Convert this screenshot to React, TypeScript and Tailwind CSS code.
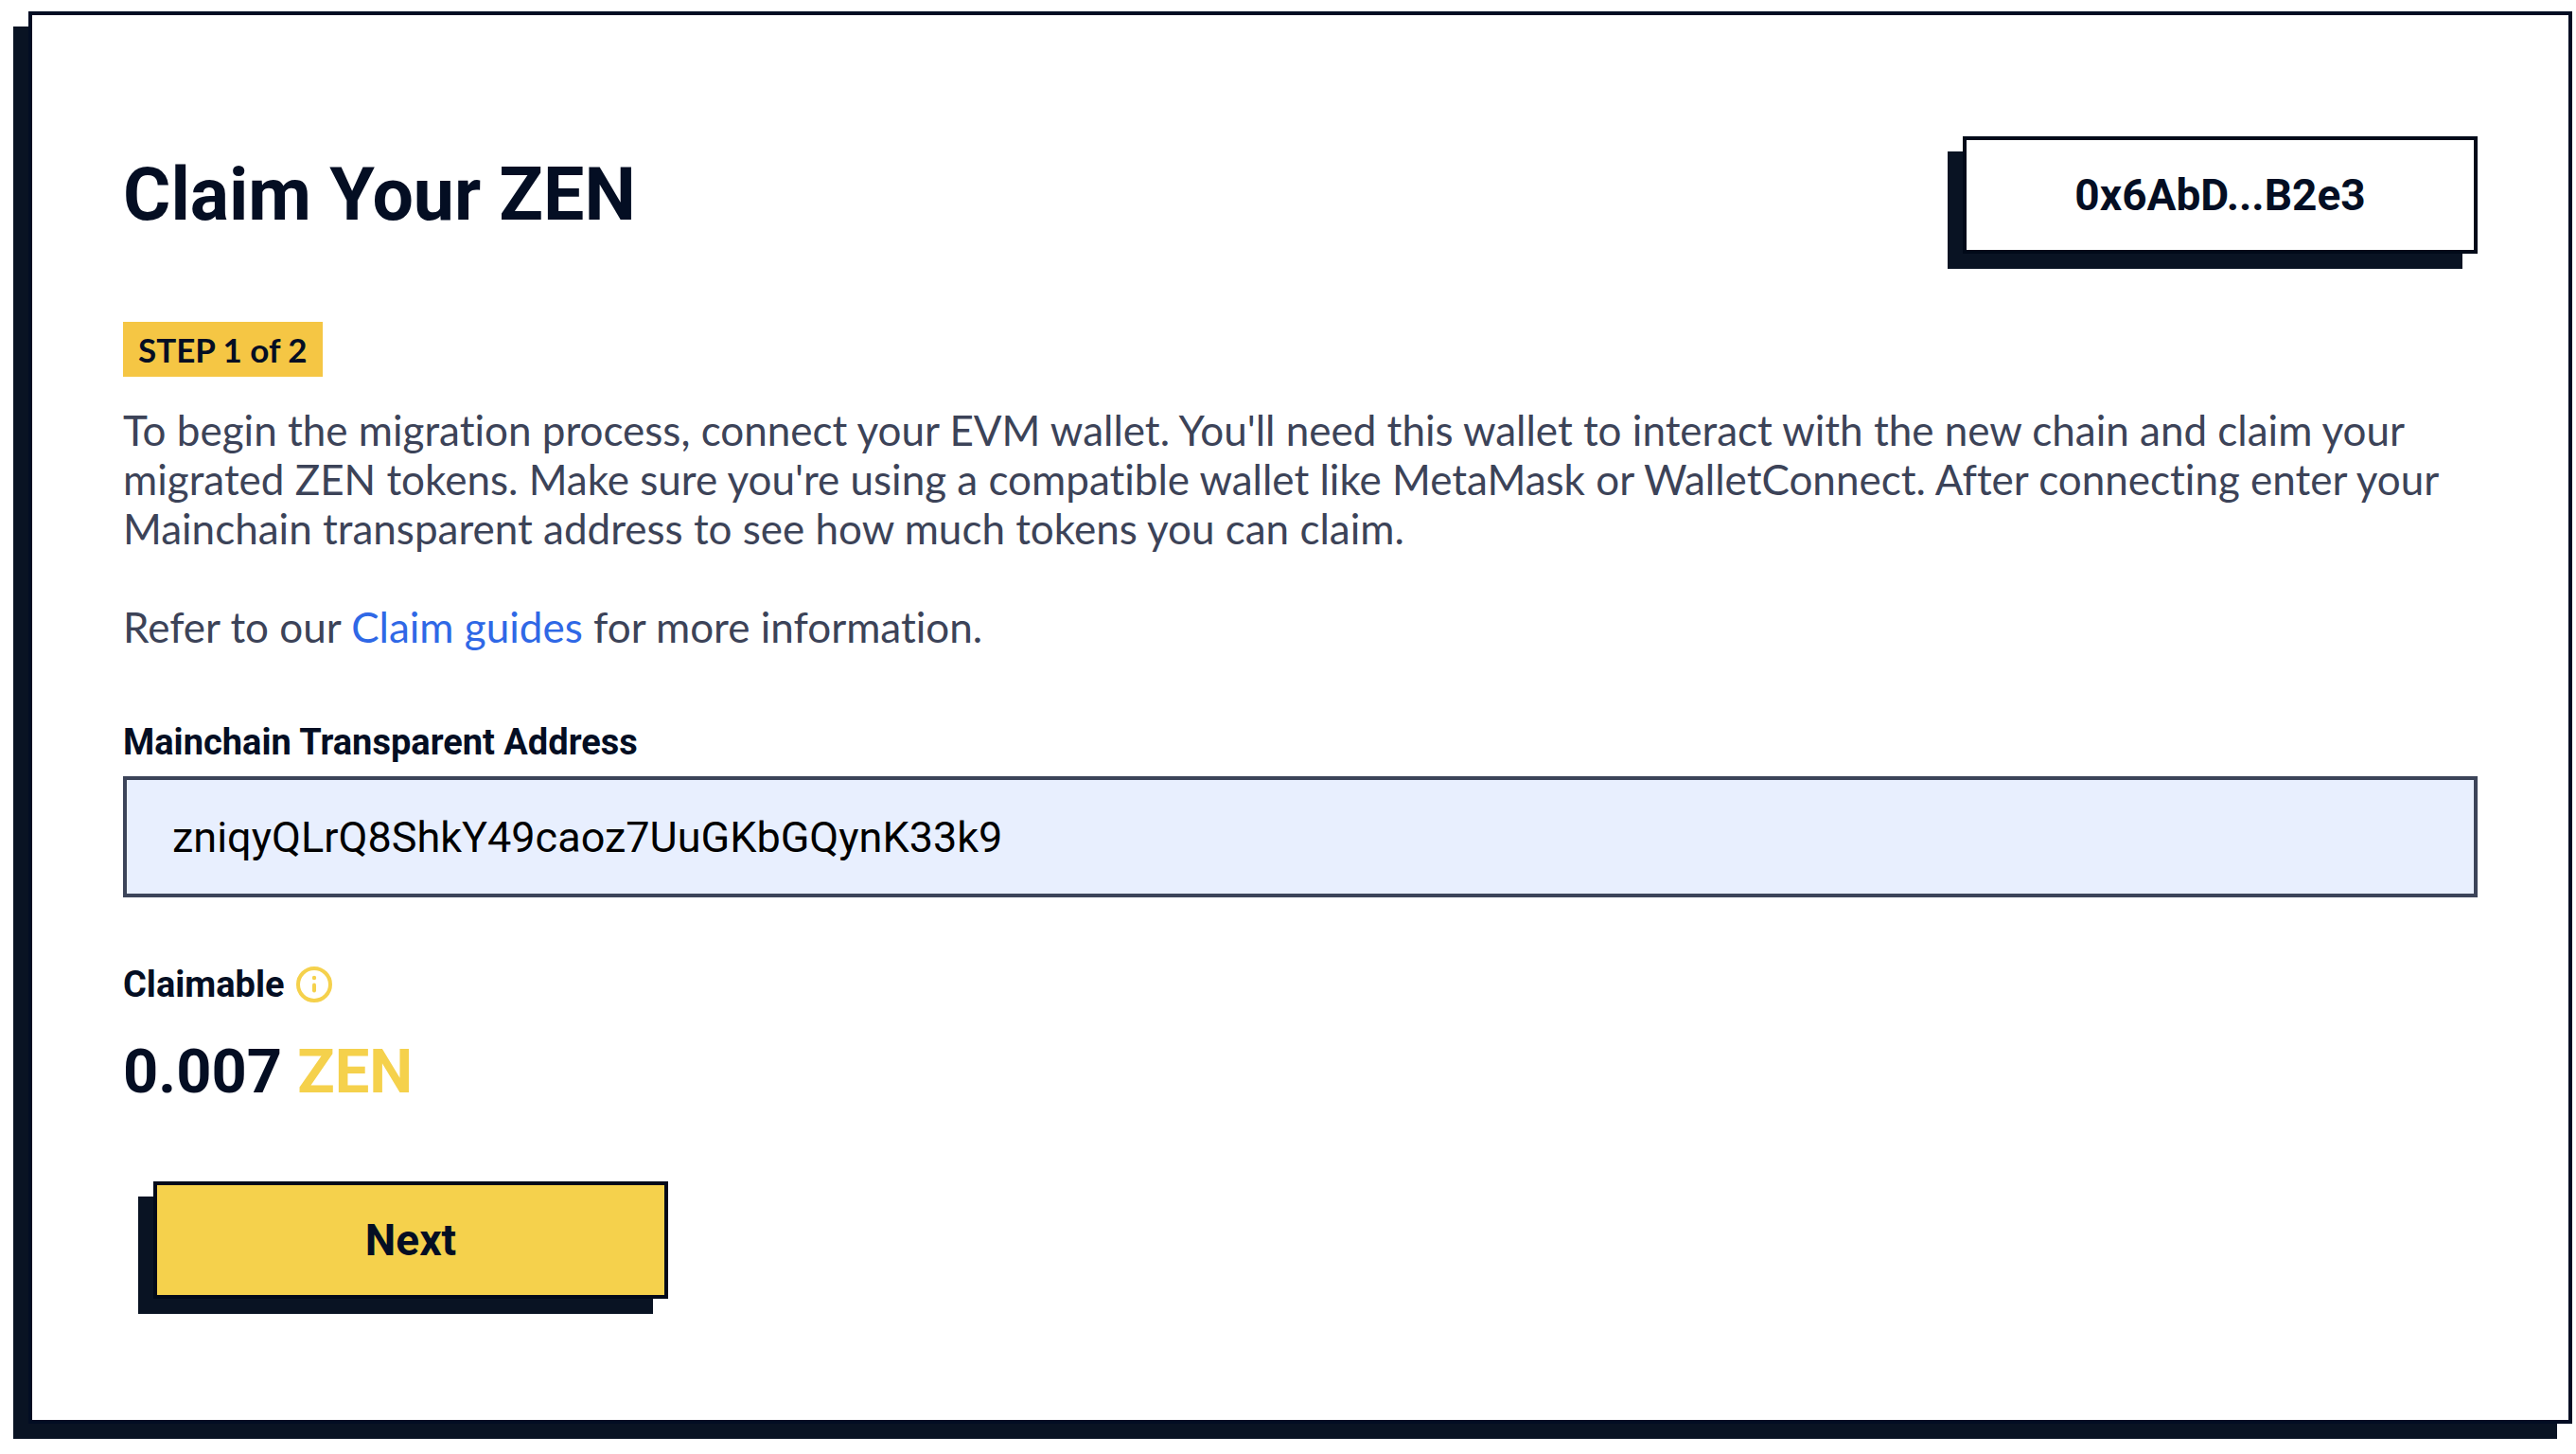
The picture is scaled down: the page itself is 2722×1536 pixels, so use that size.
import { useState } from "react";
import type { ReactNode } from "react";

function InfoIcon() {
  return (
    <svg className="size-[38px]" viewBox="0 0 38 38" fill="none" stroke="currentColor" strokeWidth="4" strokeLinecap="round" aria-hidden="true">
      <circle cx="19" cy="19" r="17" />
      <path d="M19 19.5v6" />
      <circle cx="19" cy="12" r="2.2" fill="currentColor" stroke="none" />
    </svg>
  );
}

function BlockButton({ className, children }: { className: string; children: ReactNode }) {
  return (
    <button
      type="button"
      className={`h-[124px] w-[544px] shrink-0 cursor-pointer border-4 border-[#010a19] text-[46px] leading-none font-bold shadow-[-16px_16px_0_0_#091323] ${className}`}
    >
      {children}
    </button>
  );
}

export default function App() {
  const [address, setAddress] = useState("zniqyQLrQ8ShkY49caoz7UuGKbGQynK33k9");

  return (
    <main className="bg-white pt-3 pr-1 pb-8 pl-[30px] font-['Roboto',sans-serif] text-[#040e23]">
      <section className="flex flex-col items-start border-4 border-[#020d23] bg-white px-24 py-32 shadow-[-16px_16px_0_0_#091323]">
        <header className="flex w-full items-center justify-between gap-8">
          <h1 className="text-[77px] leading-none font-bold">Claim Your ZEN</h1>
          <BlockButton className="bg-white">0x6AbD...B2e3</BlockButton>
        </header>

        <p className="mt-[72px] bg-[#f5c644] px-4 font-['Lato',sans-serif] text-[35px] leading-[58px] font-bold">STEP 1 of 2</p>

        <div className="mt-[30px] flex flex-col gap-[52px] font-['Lato',sans-serif] text-[44px] leading-[52px] text-[#3c4358] [font-variant-ligatures:none]">
          <p>
            To begin the migration process, connect your EVM wallet. You'll need this wallet to interact with the new chain and claim your
            migrated ZEN tokens. Make sure you're using a compatible wallet like MetaMask or WalletConnect. After connecting enter your
            Mainchain transparent address to see how much tokens you can claim.
          </p>
          <p>
            Refer to our{" "}
            <a href="#claim-guides" className="text-[#2f68e6]">
              Claim guides
            </a>{" "}
            for more information.
          </p>
        </div>

        <label htmlFor="address" className="mt-[72px] text-[38px] leading-[48px] font-bold">
          Mainchain Transparent Address
        </label>
        <input
          id="address"
          type="text"
          spellCheck={false}
          value={address}
          onChange={(e) => setAddress(e.target.value)}
          className="mt-3 h-32 w-full border-4 border-[#3c4459] bg-[#e8effe] px-12 text-[45px] text-black outline-none"
        />

        <div className="mt-[68px] flex items-center gap-3">
          <h2 className="text-[38px] leading-[48px] font-bold">Claimable</h2>
          <button type="button" aria-label="About the claimable amount" className="cursor-pointer text-[#f5d14c]">
            <InfoIcon />
          </button>
        </div>
        <p className="mt-7 text-[65px] leading-[80px] font-bold">
          0.007 <span className="text-[#f5d14c]">ZEN</span>
        </p>

        <BlockButton className="mt-[76px] ml-8 bg-[#f5d14c]">Next</BlockButton>
      </section>
    </main>
  );
}
